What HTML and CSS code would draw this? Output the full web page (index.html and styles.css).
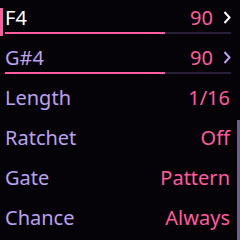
FILE: index.html
```html
<!DOCTYPE html>
<html lang="en">
<head>
  <meta charset="utf-8">
  <title>Step</title>
  <link rel="stylesheet" href="styles.css">
</head>
<body>
  <div class="menu">

    <div class="row note selected">
      <div class="accent"></div>
      <div class="line">
        <span class="label">F4</span>
        <span class="value">90</span>
        <svg class="chevron" width="8" height="13" viewBox="0 0 8 13">
          <polyline points="1.5,1 6.5,6.5 1.5,12" fill="none" stroke="currentColor" stroke-width="2"/>
        </svg>
      </div>
      <div class="bar"><div class="fill" style="width: 70.8%"></div></div>
    </div>

    <div class="row note">
      <div class="line">
        <span class="label">G#4</span>
        <span class="value">90</span>
        <svg class="chevron" width="8" height="13" viewBox="0 0 8 13">
          <polyline points="1.5,1 6.5,6.5 1.5,12" fill="none" stroke="currentColor" stroke-width="2"/>
        </svg>
      </div>
      <div class="bar"><div class="fill" style="width: 70.8%"></div></div>
    </div>

    <div class="row">
      <span class="label">Length</span>
      <span class="value">1/16</span>
    </div>
    <div class="row">
      <span class="label">Ratchet</span>
      <span class="value">Off</span>
    </div>
    <div class="row">
      <span class="label">Gate</span>
      <span class="value">Pattern</span>
    </div>
    <div class="row">
      <span class="label">Chance</span>
      <span class="value">Always</span>
    </div>

    <div class="scrollbar"></div>
  </div>
</body>
</html>
```

FILE: styles.css
```css
body {
  margin: 0;
  background: #050308;
  font-family: "Noto Sans", sans-serif;
  font-size: 20px;
}

.menu {
  position: relative;
  width: 240px;
  height: 240px;
  overflow: hidden;
}

.row {
  position: relative;
  height: 40px;
  display: flex;
  align-items: center;
  justify-content: space-between;
  padding: 0 10px 6px 5px;
  box-sizing: border-box;
}

.label {
  color: #b9a2f2;
}

.value {
  color: #ff5c9f;
}

.note {
  display: block;
  padding: 5px 9px 0 5px;
}

.note .line {
  display: flex;
  align-items: center;
  height: 24px;
}

.note .label {
  flex-grow: 1;
}

.note .chevron {
  color: #b9a2f2;
  margin-left: 10px;
}

.selected .label,
.selected .chevron {
  color: #ffffff;
}

.accent {
  position: absolute;
  left: 0;
  top: 8px;
  width: 3px;
  height: 28px;
  background: #ff5c9f;
}

.bar {
  margin-top: 3px;
  height: 2px;
  background: #2a1f38;
}

.fill {
  height: 2px;
  background: #ff5c9f;
}

.scrollbar {
  position: absolute;
  right: 0;
  top: 120px;
  width: 3px;
  height: 120px;
  background: #6b5f80;
}
```
